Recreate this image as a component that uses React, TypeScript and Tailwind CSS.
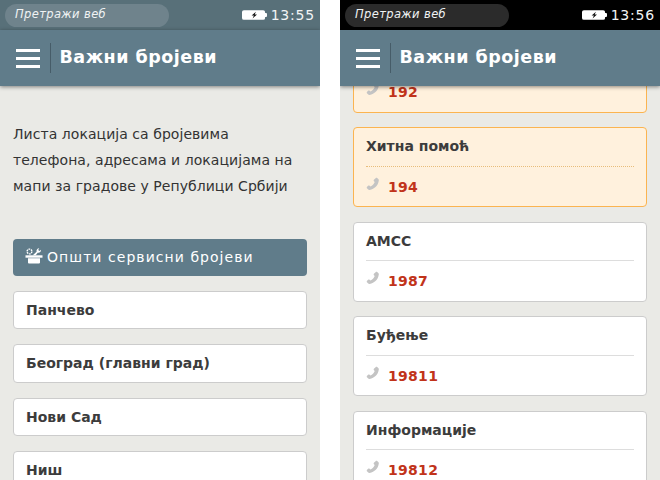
const font = { fontFamily: '"DejaVu Sans", sans-serif' };

function Burger() {
  return (
    <div className="flex w-6 flex-col gap-[5px]">
      <div className="h-[3px] bg-white" />
      <div className="h-[3px] bg-white" />
      <div className="h-[3px] bg-white" />
    </div>
  );
}

function Battery() {
  return (
    <svg width="25" height="10" viewBox="0 0 26 10">
      <path d="M2 0H22a2 2 0 0 1 2 2V3h1a1 1 0 0 1 1 1v2a1 1 0 0 1-1 1h-1v1a2 2 0 0 1-2 2H2a2 2 0 0 1-2-2V2a2 2 0 0 1 2-2z" fill="#fff" />
      <path d="M14.5 1.5 10 5.600h2.400L11 8.700 15.600 4.400h-2.400z" fill="#111" />
    </svg>
  );
}

function Phone() {
  return (
    <svg width="14" height="14" viewBox="0 0 14 14" className="shrink-0">
      <path d="M9.600 1.200c.5-.5 1.200-.5 1.600-.1l1.300 1.100c.4.4.4.9.3 1.400C12.200 8.600 8.600 12.200 3.600 12.900c-.5.1-1 0-1.400-.4L1 11.300c-.4-.4-.4-1.100.1-1.600l1-.9c.5-.4 1.100-.4 1.500 0l.8.8c2-.9 3.500-2.500 4.300-4.500l-.8-.8c-.4-.4-.4-1 0-1.500z" fill="#c4c4c4" />
    </svg>
  );
}

function Tools() {
  return (
    <svg width="18" height="18" viewBox="0 0 18 18" className="shrink-0">
      <circle cx="4.500" cy="4.500" r="2.400" fill="none" stroke="#fff" strokeWidth="1.400" strokeDasharray="1.600 .7" />
      <path d="M7.800 8.300 11.600 4.700c-.5-1.700.7-3.400 2.600-3.500l-1 1.800 1.200 1.100 1.600-1.300c.1 2-1.500 3.400-3.300 2.900L10.800 8.300z" fill="#fff" />
      <path d="M.5 8.300h17v2.400H.5z" fill="#fff" />
      <path d="M3 11.300h12v4.300c0 .5-.4.9-.9.9H3.900c-.5 0-.9-.4-.9-.9z" fill="#fff" />
    </svg>
  );
}

function Chrome({ bar, pill, time }: { bar: string; pill: string; time: string }) {
  return (
    <div className="relative z-10 shrink-0">
      <div className={`flex h-[30px] items-center justify-between pl-[5px] pr-[5px] ${bar}`}>
        <div className={`flex h-[23px] w-[164px] items-center rounded-full pl-[10px] text-[11.500px] italic leading-none tracking-[0.380px] text-[#f0f3f4] ${pill}`}>
          Претражи веб
        </div>
        <div className="flex items-center gap-[4px]">
          <Battery />
          <span className="text-[14px] leading-none tracking-[0.800px] text-[#f2f4f5]">{time}</span>
        </div>
      </div>
      <div className="flex h-[56px] items-center bg-[#607c8a] pl-4 shadow-[0_1px_4px_rgba(0,0,0,0.45)]">
        <Burger />
        <div className="ml-[10px] h-[30px] w-px bg-[#465c68]" />
        <h1 className="ml-[8.500px] -mt-[1px] text-[17.500px] font-bold tracking-[0.500px] text-white">Важни бројеви</h1>
      </div>
    </div>
  );
}

function City({ name }: { name: string }) {
  return (
    <div className="flex h-[38.500px] shrink-0 items-center rounded-[4px] border border-[#cccccc] bg-white pl-3 pt-[1px] text-[14px] font-semibold text-[#3c3c3c]">
      {name}
    </div>
  );
}

function Card({ title, num, warn }: { title?: string; num: string; warn?: boolean }) {
  return (
    <div className={`shrink-0 rounded-[4px] border px-3 ${warn ? "border-[#fbb450] bg-[#fff1dd]" : "border-[#cccccc] bg-white"}`}>
      {title && (
        <div className={`flex h-[38.500px] items-center border-b text-[14px] font-semibold text-[#3c3c3c] ${warn ? "border-dotted border-[#e8bd7a]" : "border-[#dddddd]"}`}>
          {title}
        </div>
      )}
      <div className="flex h-[39.500px] items-center gap-[8px] pt-[2px]">
        <div className="-mt-[7px]"><Phone /></div>
        <span className="text-[14px] font-semibold tracking-[0.300px] text-[#c1331a]">{num}</span>
      </div>
    </div>
  );
}

export default function App() {
  return (
    <div className="flex h-[480px] w-[660px] gap-5 overflow-hidden bg-white" style={font}>
      <div className="flex h-full w-[320px] flex-col overflow-hidden bg-[#eaeae6]">
        <Chrome bar="bg-[#587079]" pill="bg-[#6f838c]" time="13:55" />
        <div className="flex flex-col px-[13px]">
          <p className="mt-[35px] text-[14px] leading-[26px] tracking-[0.050px] text-[#333333]">
            Листа локација са бројевима телефона, адресама и локацијама на мапи за градове у Републици Србији
          </p>
          <div className="mt-[40px] flex h-[37px] items-center gap-[4px] rounded-[4px] bg-[#607c8a] pl-[12px] text-[14px] font-medium tracking-[1.050px] text-white">
            <div className="-mt-[3px]"><Tools /></div>
            Општи сервисни бројеви
          </div>
          <div className="mt-[14.500px] flex flex-col gap-[15px]">
            <City name="Панчево" />
            <City name="Београд (главни град)" />
            <City name="Нови Сад" />
            <City name="Ниш" />
          </div>
        </div>
      </div>
      <div className="flex h-full w-[320px] flex-col overflow-hidden bg-[#eaeae6]">
        <Chrome bar="bg-black" pill="bg-[#2b2b2b]" time="13:56" />
        <div className="-mt-[15px] flex flex-col gap-[14.500px] px-[13px]">
          <Card num="192" warn />
          <Card title="Хитна помоћ" num="194" warn />
          <Card title="АМСС" num="1987" />
          <Card title="Буђење" num="19811" />
          <Card title="Информације" num="19812" />
        </div>
      </div>
    </div>
  );
}
